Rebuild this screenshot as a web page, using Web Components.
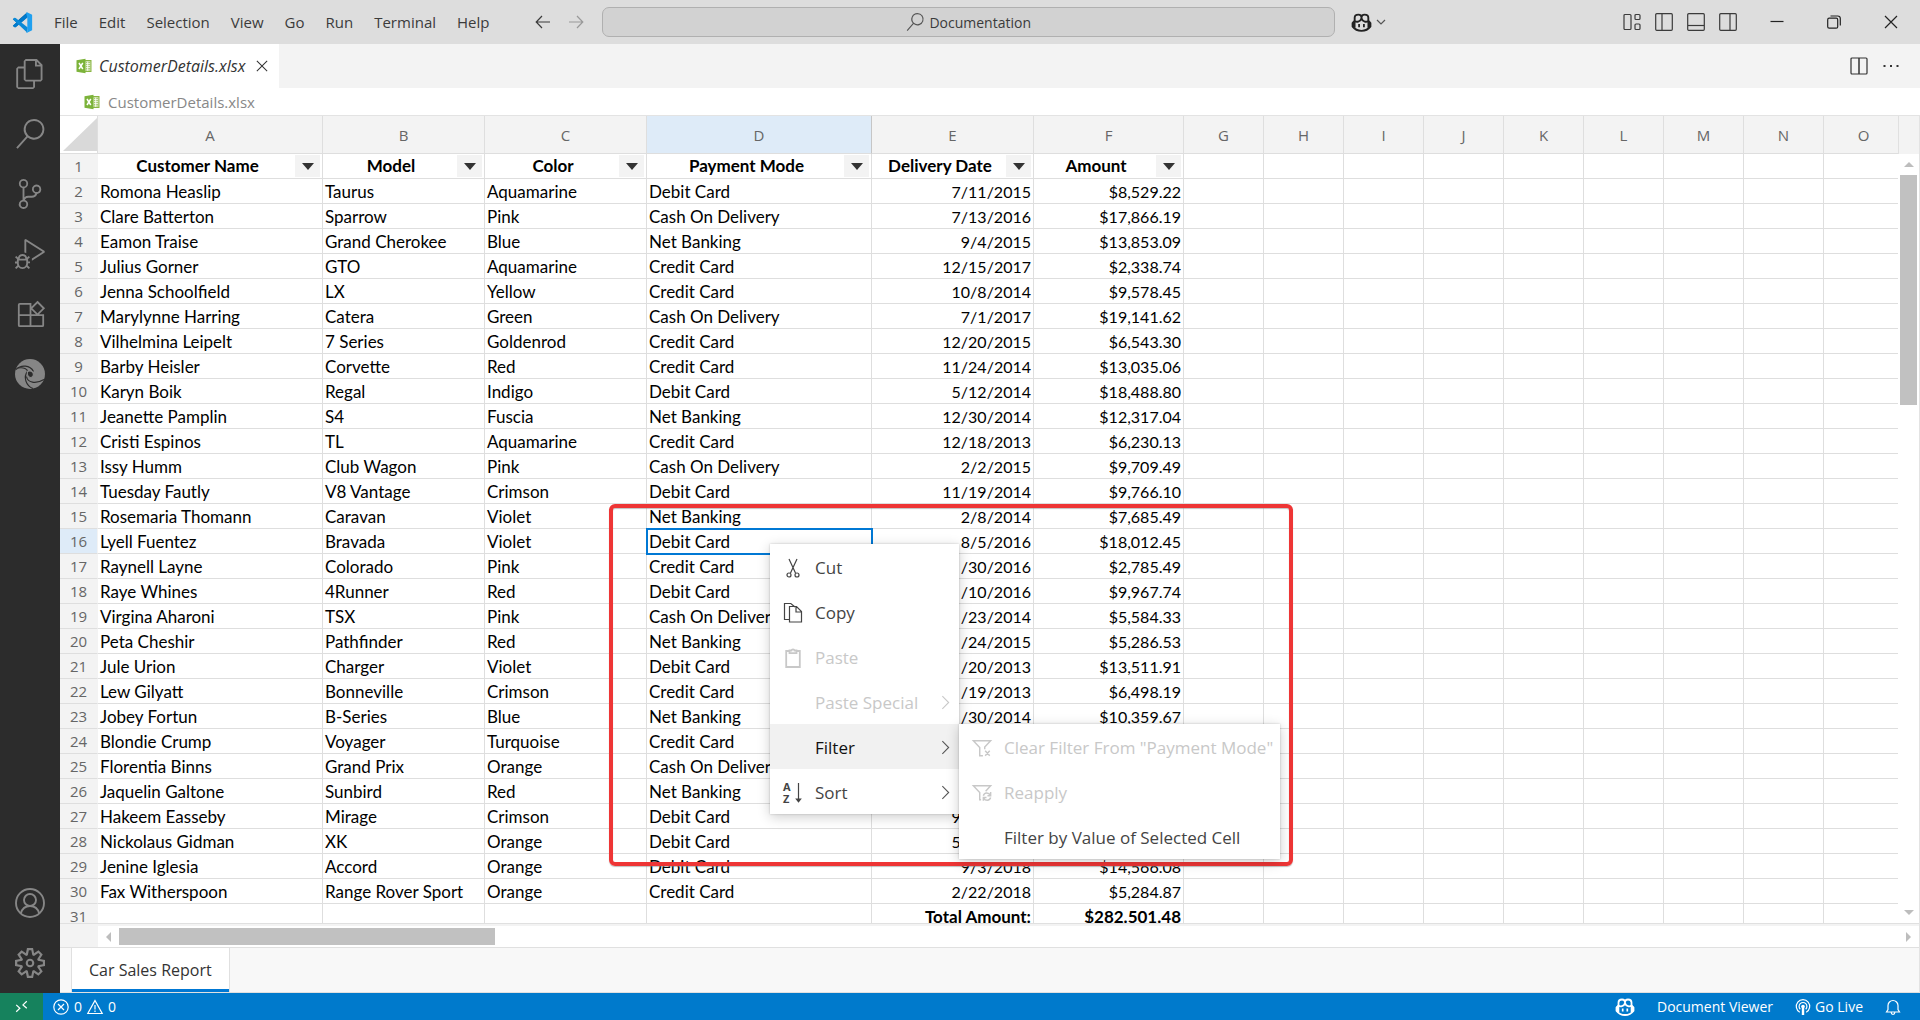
<!DOCTYPE html>
<html lang="en">
<head>
<meta charset="utf-8">
<title>CustomerDetails.xlsx - Documentation</title>
<style>
  html, body { height: 100%; }
  body { margin: 0; overflow: hidden; font-family: "Open Sans", "Noto Sans", sans-serif; font-size: 15px; color: #333; }
  work-bench { height: 100%; }
</style>
</head>
<body>
<work-bench>
  <title-bar slot="title"></title-bar>
  <activity-bar slot="activity"></activity-bar>
  <editor-tabs slot="editor"></editor-tabs>
  <sheet-view slot="editor">
    <sheet-grid slot="grid"></sheet-grid>
    <callout-frame slot="overlay"></callout-frame>
    <context-menu slot="overlay" class="cell-menu">
      <menu-item icon="cut">Cut</menu-item>
      <menu-item icon="copy">Copy</menu-item>
      <menu-item icon="paste" disabled>Paste</menu-item>
      <menu-item more disabled>Paste Special</menu-item>
      <menu-item more active>Filter
        <context-menu slot="submenu" class="wide">
          <menu-item icon="filterclear" disabled>Clear Filter From "Payment Mode"</menu-item>
          <menu-item icon="filterredo" disabled>Reapply</menu-item>
          <menu-item>Filter by Value of Selected Cell</menu-item>
        </context-menu>
      </menu-item>
      <menu-item icon="sort" more>Sort</menu-item>
    </context-menu>
  </sheet-view>
  <status-bar slot="status"></status-bar>
</work-bench>

<script>
const ICONS = {
  vscode: ['0 0 24 24', '<path fill="#0065a9" d="M1 8.2l1.6-1.4 4 3L17 .6 18 5.4 4 17.3l-1.5-.1L1 15.700l4-3.700z"/><path fill="#007acc" d="M1 15.800L17.200 1l.8 5L4.200 17.300 2.700 17.400z"/><path fill="#0a8ad8" d="M1 8.200L2.700 6.700l1.500.1L18 17.800 17.200 23.400z"/><path fill="#1fa0f0" d="M17.200.4L23 3.200v17.600l-5.800 2.800c-.6-.1-.9-.4-1.200-.8l1.500-.6V6l-1.500-4.800z"/>'],
  back: ['0 0 16 16', '<path d="M15 8H1.500M7 2L1.200 8 7 14"/>'],
  forward: ['0 0 16 16', '<path d="M1 8h13.500M9 2l5.800 6L9 14"/>'],
  search: ['0 0 24 24', '<path class="f" d="M15.250 0a8.250 8.250 0 0 0-6.180 13.720L1 22.880l1.120 1 8.050-9.120A8.251 8.251 0 1 0 15.250.01V0zm0 15a6.750 6.750 0 1 1 0-13.500 6.750 6.750 0 0 1 0 13.500z"/>'],
  copilot: ['0 0 20 18', '<path stroke-width="1.800" d="M3.500 8V4.500C3.500 2.200 5 1.500 7 1.500c2.300 0 3 1 3 2.800 0-1.800.7-2.800 3-2.800 2 0 3.500.7 3.500 3V8M3.500 7.500C5 8.800 9 8.800 10 5c1 3.800 5 3.800 6.500 2.500M10 4v2"/><path stroke-width="1.800" d="M3.500 7.500L1.500 9.500v3.200C3.500 15.500 6.500 17 10 17s6.500-1.500 8.500-4.300V9.500l-2-2"/><path stroke-width="1.700" d="M7.700 10.500v3M12.300 10.500v3"/><path stroke-width="2.600" d="M3 8v6M17 8v6"/>'],
  down: ['0 0 10 10', '<path d="M1 3l4 4 4-4"/>'],
  layout: ['0 0 18 18', '<rect x="1" y="1.500" width="7" height="15" rx="1"/><rect x="12" y="1.500" width="5" height="5" rx="1"/><rect x="12" y="11" width="5" height="5.500" rx="1"/>'],
  left: ['0 0 18 18', '<rect x=".7" y=".7" width="16.600" height="16.600" rx="1"/><path d="M7 1v16"/>'],
  panel: ['0 0 18 18', '<rect x=".7" y=".7" width="16.600" height="16.600" rx="1"/><path d="M1 12.500h16"/>'],
  right: ['0 0 18 18', '<rect x=".7" y=".7" width="16.600" height="16.600" rx="1"/><path d="M11 1v16"/>'],
  split: ['0 0 18 18', '<rect x="1" y="1" width="16" height="16" rx="1"/><path stroke-width="1.500" d="M9 1v16"/>'],
  min: ['0 0 14 14', '<path d="M.5 6.500h13"/>'],
  restore: ['0 0 14 14', '<rect x=".7" y="3.200" width="10" height="10" rx="1.500"/><path d="M3.500 1h7.200c1.500 0 2.600 1.100 2.600 2.600v7"/>'],
  close: ['0 0 14 14', '<path d="M1 1l12 12M13 1L1 13"/>'],
  dots: ['0 0 18 18', '<path class="f" d="M1.500 8h2v2h-2zM8 8h2v2H8zM14.500 8h2v2h-2z"/>'],
  files: ['0 0 24 24', '<path class="f" d="M17.500 0h-9L7 1.500V6H2.500L1 7.500v15.070L2.500 24h12.070L16 22.570V18h4.700l1.300-1.430V4.500L17.500 0zm0 2.120l2.380 2.380H17.500V2.120zm-3 20.380h-12v-15H7v9.070L8.500 18h6v4.500zm6-6h-12v-15H16V6h4.500v10.500z"/>'],
  scm: ['0 0 24 24', '<path class="f" d="M21.007 8.222A3.738 3.738 0 0 0 15.045 5.200a3.737 3.737 0 0 0 1.156 6.583 2.988 2.988 0 0 1-2.668 1.670h-2.990a4.456 4.456 0 0 0-2.989 1.165V7.400a3.737 3.737 0 1 0-1.494 0v9.117a3.776 3.776 0 1 0 1.816.099 2.990 2.990 0 0 1 2.668-1.667h2.990a4.484 4.484 0 0 0 4.223-3.039 3.736 3.736 0 0 0 3.250-3.687zM4.565 3.738a2.242 2.242 0 1 1 4.484 0 2.242 2.242 0 0 1-4.484 0zm4.484 16.441a2.242 2.242 0 1 1-4.484 0 2.242 2.242 0 0 1 4.484 0zm8.221-9.715a2.242 2.242 0 1 1 0-4.485 2.242 2.242 0 0 1 0 4.485z"/>'],
  debug: ['0 0 24 24', '<path class="f" d="M10.940 13.500l-1.320 1.320a3.730 3.730 0 0 0-7.240 0L1.060 13.500 0 14.560l1.720 1.720-.22.22V18H0v1.500h1.500v.08c.077.489.214.966.41 1.420L0 22.940 1.060 24l1.650-1.650A4.308 4.308 0 0 0 6 24a4.310 4.310 0 0 0 3.290-1.650L10.940 24 12 22.940 10.090 21c.198-.464.336-.951.41-1.450v-.1H12V18h-1.500v-1.500l-.22-.22L12 14.560l-1.060-1.060zM6 13.500a2.250 2.250 0 0 1 2.250 2.250h-4.500A2.250 2.250 0 0 1 6 13.500zm3 6a3.330 3.330 0 0 1-3 3 3.330 3.330 0 0 1-3-3v-2.250h6v2.250zm14.760-9.900v1.260L13.500 17.370V15.600l8.500-5.370L9 2v9.460a5.070 5.070 0 0 0-1.500-.72V.63L8.640 0l15.120 9.600z"/>'],
  ext: ['0 0 30 30', '<path stroke-width="1.800" d="M15.500 16V4.800H4.800a1 1 0 0 0-1 1v20.400a1 1 0 0 0 1 1h22.400a1 1 0 0 0 1-1V16.200H3.800M15.500 16v11M22.500 3l6.300 6.300-6.300 6.300-6.300-6.300z"/>'],
  edge: ['0 0 30 30', '<circle class="f" cx="15" cy="15" r="15"/><g style="stroke:#2c2c2c"><path d="M1 10.500C6 5.500 15 6 18.500 12.500"/><path d="M3 9C9 8 12.500 10 12.500 12.500 8 18 11 27 18 29.500"/><path d="M11.500 17.500c1 6 9 8 17.500 3"/></g><path fill="#2c2c2c" d="M12.500 12.500c2.500-1.300 5.200-.4 5.800 2 .6 2.200-.8 4-2.700 4-2.400 0-3.800-2.500-3.100-6z"/>'],
  account: ['0 0 30 30', '<g stroke-width="1.900"><circle cx="15" cy="15" r="14"/><circle cx="15" cy="12" r="6"/><path d="M5.800 25.500C7 21 10.500 18 15 18s8 3 9.200 7.500"/></g>'],
  gear: ['0 0 24 24', '<path class="f" fill-rule="evenodd" d="M19.850 8.750l4.150.83v4.840l-4.150.83 2.350 3.520-3.430 3.430-3.520-2.350-.83 4.150H9.580l-.83-4.150-3.520 2.350-3.430-3.430 2.350-3.520L0 14.420V9.580l4.150-.83L1.800 5.230 5.230 1.800l3.520 2.350L9.580 0h4.840l.83 4.150 3.520-2.350 3.430 3.430-2.350 3.520zm-1.570 5.070l4-.81v-2l-4-.81-.54-1.300 2.290-3.430-1.430-1.430-3.430 2.290-1.300-.54-.81-4h-2l-.81 4-1.300.54-3.430-2.290-1.430 1.430L6.380 8.900l-.54 1.300-4 .81v2l4 .81.54 1.300-2.290 3.430 1.430 1.430 3.430-2.290 1.300.54.81 4h2l.81-4 1.300-.54 3.430 2.290 1.430-1.430-2.290-3.430.54-1.300z"/><circle cx="12" cy="12" r="2.600" stroke-width="1.700"/>'],
  excel: ['0 0 16 16', '<path fill="#8ab643" d="M9 2h6.500v12H9z"/><path fill="#fff" d="M9.300 3.300h5v9.600h-5z"/><path fill="none" style="stroke:#8ab643" stroke-width="1.100" d="M10 4.300h1.300M12.200 4.300h2M10 6.300h1.300M12.200 6.300h2M10 8.300h1.300M12.200 8.300h2M10 10.300h1.300M12.200 10.300h2M10 12h1.300M12.200 12h2"/><path fill="#7cb33a" d="M.5 2.200L9.500.7v14.600l-9-1.500z"/><path style="stroke:#fff" stroke-width="1.500" d="M3 5l3.800 6M6.800 5L3 11"/>'],
  remote: ['0 0 16 16', '<path stroke-width="1.500" d="M1.500 6L6 10.200 1.500 14.500M14.500 1.500L9.800 6l4.700 4.200"/>'],
  error: ['0 0 16 16', '<circle cx="8" cy="8" r="7.200"/><path d="M5 5l6 6M11 5l-6 6"/>'],
  warn: ['0 0 16 16', '<path d="M8 1.500L15.200 14.500H.8zM8 6v4.500M8 11.500V13"/>'],
  live: ['0 0 16 16', '<path d="M4.800 13.300A6.700 6.700 0 1 1 11.200 13.300M5.300 10.200A3.900 3.900 0 1 1 10.700 10.200" /><circle class="f" cx="8" cy="7.500" r="1.800"/><path stroke-width="2.400" d="M8 8v8"/>'],
  bell: ['0 0 16 16', '<path d="M1.500 13h13L13 10.500V6.500a5 5 0 0 0-10 0v4zM6.200 13.500a1.800 1.800 0 0 0 3.600 0"/>'],
  cut: ['0 0 20 20', '<path d="M6 1l6.500 14M14 1L7.500 15"/><circle cx="6" cy="17" r="2"/><circle cx="14" cy="17" r="2"/>'],
  copy: ['0 0 20 20', '<path d="M6 16.500H1.500v-16h6.300L12 4M6.500 3.500h7l5 5V19h-12zM13 4v5h5"/>'],
  paste: ['0 0 20 20', '<path stroke-width="1.800" d="M7 3H3.200v16h13.600V3H13M6.500 2.500h2C8.700 1 11.300 1 11.500 2.500h2v2.600h-7z"/>'],
  filterclear: ['0 0 22 20', '<path stroke-width="1.600" d="M12 18.500H8.500V9.500L1.500 2h19L14 9v2.500M14.500 13l5 5.500M19.500 13l-5 5.500"/>'],
  filterredo: ['0 0 22 20', '<path stroke-width="1.600" d="M10 17.500H8.500V9.500L1.500 2h19L15 8M12.500 13c1-4 6-4 7.500-.5M20.500 9v4H17M20.500 15c-1 4-6 3.500-7.500.8M12.500 18.500V15H16"/>'],
  sort: ['0 0 20 20', '<text x="0" y="8" font-size="11" font-weight="700">A</text><text x="0" y="20" font-size="11" font-weight="700">Z</text><path d="M15.500 0v18"/><path class="f" d="M12.200 15.500h6.600L15.500 19.800z"/>'],
  more: ['0 0 10 16', '<path d="M1.500 1L8.500 8l-7 7"/>']
};

function define(name, html, setup) {
  const tpl = document.createElement('template');
  tpl.innerHTML = html;
  customElements.define(name, class extends HTMLElement {
    constructor() {
      super();
      this.attachShadow({ mode: 'open' }).append(tpl.content.cloneNode(true));
    }
    connectedCallback() {
      if (setup && !this.ready) { this.ready = true; setup(this, this.shadowRoot); }
    }
  });
}

/* Shared look of flat icon and text buttons. */
const BUTTON = `button { font: inherit; color: inherit; background: none; border: 0; margin: 0; padding: 0; display: flex; align-items: center; justify-content: center; }`;

define('vs-icon', `
<style>
  :host { display: block; flex: none; width: 18px; height: 18px; }
  svg { display: block; width: 100%; height: 100%; fill: none; stroke: currentColor; stroke-width: 1.2; overflow: visible; }
  .f { fill: currentColor; stroke: none; }
  text { fill: currentColor; stroke: none; font-family: "Open Sans", sans-serif; }
  .own { stroke: none; }
</style><svg aria-hidden="true"></svg>`, (host, root) => {
  const [box, body] = ICONS[host.getAttribute('name')];
  const svg = root.querySelector('svg');
  svg.setAttribute('viewBox', box);
  svg.innerHTML = body;
  if (host.getAttribute('name') === 'vscode' || host.getAttribute('name') === 'excel') svg.classList.add('own');
});

define('work-bench', `
<style>
  :host { display: flex; flex-direction: column; }
  .main { flex: 1; min-height: 0; display: flex; }
  .editor { flex: 1; min-width: 0; display: flex; flex-direction: column; background: #fff; }
</style>
<slot name="title"></slot>
<div class="main"><slot name="activity"></slot><div class="editor"><slot name="editor"></slot></div></div>
<slot name="status"></slot>`);

define('title-bar', `
<style>
  :host { display: flex; align-items: center; height: 44px; background: #ddd; color: #3b3b3b; flex: none; }
  ${BUTTON}
  nav { display: flex; gap: 1px; padding-left: 16px; }
  nav button { padding: 0 10px; height: 30px; }
  .logo { width: 21px; height: 21px; margin-left: 12px; margin-right: -5px; }
  .history { display: flex; gap: 17px; margin-left: 36px; margin-right: 18px; }
  .history vs-icon { width: 16px; height: 16px; }
  .history button + button { color: #999; }
  .center { flex: 1; height: 30px; box-sizing: border-box; border: 1px solid #b0b0b0; border-radius: 7px; background: #d2d2d2; gap: 5px; font-size: 14px; }
  .center vs-icon { width: 18px; height: 18px; color: #555; }
  .copilot { margin-left: 16px; gap: 4px; }
  .copilot vs-icon { width: 21px; height: 19px; color: #222; }
  .copilot vs-icon + vs-icon { width: 10px; height: 10px; color: #555; }
  .layouts { display: flex; gap: 14px; margin-left: auto; margin-right: 33px; }
  .tail { display: flex; width: 534px; }
  .window { display: flex; gap: 43px; margin-right: 22px; color: #222; }
  .window vs-icon { width: 14px; height: 14px; }
</style>
<vs-icon class="logo" name="vscode"></vs-icon>
<nav aria-label="Main menu"><button>File</button><button>Edit</button><button>Selection</button><button>View</button><button>Go</button><button>Run</button><button>Terminal</button><button>Help</button></nav>
<div class="history"><button aria-label="Back"><vs-icon name="back"></vs-icon></button><button aria-label="Forward"><vs-icon name="forward"></vs-icon></button></div>
<button class="center"><vs-icon name="search"></vs-icon><span>Documentation</span></button>
<button class="copilot" aria-label="Copilot"><vs-icon name="copilot"></vs-icon><vs-icon name="down"></vs-icon></button>
<div class="tail">
  <div class="layouts"><button aria-label="Customize layout"><vs-icon name="layout"></vs-icon></button><button aria-label="Primary side bar"><vs-icon name="left"></vs-icon></button><button aria-label="Panel"><vs-icon name="panel"></vs-icon></button><button aria-label="Secondary side bar"><vs-icon name="right"></vs-icon></button></div>
  <div class="window"><button aria-label="Minimize"><vs-icon name="min"></vs-icon></button><button aria-label="Restore"><vs-icon name="restore"></vs-icon></button><button aria-label="Close"><vs-icon name="close"></vs-icon></button></div>
</div>`);

define('activity-bar', `
<style>
  :host { display: flex; flex-direction: column; width: 60px; background: #2c2c2c; color: #868686; flex: none; }
  ${BUTTON}
  button { height: 60px; }
  vs-icon { width: 30px; height: 30px; }
  .space { flex: 1; }
</style>
<button aria-label="Explorer"><vs-icon name="files"></vs-icon></button>
<button aria-label="Search"><vs-icon name="search"></vs-icon></button>
<button aria-label="Source control"><vs-icon name="scm"></vs-icon></button>
<button aria-label="Run and debug"><vs-icon name="debug"></vs-icon></button>
<button aria-label="Extensions"><vs-icon name="ext"></vs-icon></button>
<button aria-label="Edge tools"><vs-icon name="edge"></vs-icon></button>
<div class="space"></div>
<button aria-label="Account"><vs-icon name="account"></vs-icon></button>
<button aria-label="Manage"><vs-icon name="gear"></vs-icon></button>`);

define('editor-tabs', `
<style>
  :host { display: block; flex: none; }
  ${BUTTON}
  .tabs { display: flex; height: 44px; background: #f3f3f3; align-items: center; }
  .tab { display: flex; align-items: center; height: 44px; box-sizing: border-box; background: #fff; padding: 0 11px 0 16px; }
  .tab .name { font-style: italic; font-size: 16px; margin: 0 11px 0 7px; }
  .file { width: 16px; height: 16px; }
  .tab button vs-icon { width: 12px; height: 12px; }
  .actions { margin-left: auto; display: flex; gap: 14px; padding-right: 20px; }
  .crumbs { display: flex; align-items: center; height: 27px; padding-left: 24px; gap: 8px; color: #888; }
</style>
<div class="tabs">
  <div class="tab"><vs-icon class="file" name="excel"></vs-icon><button class="name">CustomerDetails.xlsx</button><button aria-label="Close"><vs-icon name="close"></vs-icon></button></div>
  <div class="actions"><button aria-label="Split editor"><vs-icon name="split"></vs-icon></button><button aria-label="More"><vs-icon name="dots"></vs-icon></button></div>
</div>
<div class="crumbs"><vs-icon class="file" name="excel"></vs-icon><span>CustomerDetails.xlsx</span></div>`);

define('sheet-view', `
<style>
  :host { flex: 1; min-height: 0; display: flex; flex-direction: column; position: relative; border-top: 1px solid #e3e3e3; border-right: 1px solid #e3e3e3; }
  ${BUTTON}
  .upper { flex: 1; min-height: 0; display: flex; border-bottom: 1px solid #e0e0e0; }
  .viewport { flex: 1; min-width: 0; overflow: hidden; }
  .vbar { width: 21px; display: flex; flex-direction: column; align-items: center; }
  .cap { align-self: stretch; height: 38px; flex: none; background: #f3f3f3; border-left: 1px solid #e0e0e0; }
  .vbar button, .hbar button { width: 21px; height: 21px; flex: none; }
  .tri { border: 5px solid transparent; }
  .vbar .up { border-bottom-color: #bdbdbd; border-top: 0; }
  .vbar .dn { border-top-color: #bdbdbd; border-bottom: 0; }
  .hbar .lf { border-right-color: #bdbdbd; border-left: 0; }
  .hbar .rt { border-left-color: #bdbdbd; border-right: 0; }
  .vbar .thumb { width: 17px; height: 230px; background: #c1c1c1; }
  .vbar .grow, .hbar .grow { flex: 1; }
  .lower { display: flex; height: 23px; flex: none; background: #f3f3f3; padding-top: 2px; box-sizing: border-box; }
  .hbar { flex: 1; margin-left: 38px; background: #fff; display: flex; align-items: center; }
  .hbar .thumb { height: 17px; width: 376px; background: #c1c1c1; }
  .sheets { flex: none; height: 46px; box-sizing: border-box; border-top: 1px solid #e0e0e0; border-bottom: 1px solid #e0e0e0; background: #f8f8f8; padding-left: 11px; display: flex; }
  .sheets button { background: #fff; padding: 0 17px; border: 0 solid #e0e0e0; border-width: 0 1px; box-shadow: inset 0 -3px #0078d4; font-size: 16px; }
</style>
<div class="upper">
  <div class="viewport"><slot name="grid"></slot></div>
  <div class="vbar"><div class="cap"></div><button aria-label="Scroll up"><span class="tri up"></span></button><div class="thumb"></div><div class="grow"></div><button aria-label="Scroll down"><span class="tri dn"></span></button></div>
</div>
<div class="lower"><div class="hbar"><button aria-label="Scroll left"><span class="tri lf"></span></button><div class="thumb"></div><div class="grow"></div><button aria-label="Scroll right"><span class="tri rt"></span></button></div></div>
<div class="sheets"><button>Car Sales Report</button></div>
<slot name="overlay"></slot>`);

const HEADS = ['Customer Name', 'Model', 'Color', 'Payment Mode', 'Delivery Date', 'Amount'];
const ROWS = `Romona Heaslip|Taurus|Aquamarine|Debit Card|7/11/2015|$8,529.22
Clare Batterton|Sparrow|Pink|Cash On Delivery|7/13/2016|$17,866.19
Eamon Traise|Grand Cherokee|Blue|Net Banking|9/4/2015|$13,853.09
Julius Gorner|GTO|Aquamarine|Credit Card|12/15/2017|$2,338.74
Jenna Schoolfield|LX|Yellow|Credit Card|10/8/2014|$9,578.45
Marylynne Harring|Catera|Green|Cash On Delivery|7/1/2017|$19,141.62
Vilhelmina Leipelt|7 Series|Goldenrod|Credit Card|12/20/2015|$6,543.30
Barby Heisler|Corvette|Red|Credit Card|11/24/2014|$13,035.06
Karyn Boik|Regal|Indigo|Debit Card|5/12/2014|$18,488.80
Jeanette Pamplin|S4|Fuscia|Net Banking|12/30/2014|$12,317.04
Cristi Espinos|TL|Aquamarine|Credit Card|12/18/2013|$6,230.13
Issy Humm|Club Wagon|Pink|Cash On Delivery|2/2/2015|$9,709.49
Tuesday Fautly|V8 Vantage|Crimson|Debit Card|11/19/2014|$9,766.10
Rosemaria Thomann|Caravan|Violet|Net Banking|2/8/2014|$7,685.49
Lyell Fuentez|Bravada|Violet|Debit Card|8/5/2016|$18,012.45
Raynell Layne|Colorado|Pink|Credit Card|/30/2016|$2,785.49
Raye Whines|4Runner|Red|Debit Card|/10/2016|$9,967.74
Virgina Aharoni|TSX|Pink|Cash On Delivery|/23/2014|$5,584.33
Peta Cheshir|Pathfinder|Red|Net Banking|/24/2015|$5,286.53
Jule Urion|Charger|Violet|Debit Card|/20/2013|$13,511.91
Lew Gilyatt|Bonneville|Crimson|Credit Card|/19/2013|$6,498.19
Jobey Fortun|B-Series|Blue|Net Banking|/30/2014|$10,359.67
Blondie Crump|Voyager|Turquoise|Credit Card||
Florentia Binns|Grand Prix|Orange|Cash On Delivery||
Jaquelin Galtone|Sunbird|Red|Net Banking||
Hakeem Easseby|Mirage|Crimson|Debit Card|9/10/2014|
Nickolaus Gidman|XK|Orange|Debit Card|5/10/2016|
Jenine Iglesia|Accord|Orange|Debit Card|9/3/2018|$14,566.08
Fax Witherspoon|Range Rover Sport|Orange|Credit Card|2/22/2018|$5,284.87
||||Total Amount:|$282.501.48`.split('\n').map(r => r.split('|'));

define('sheet-grid', `
<style>
  :host { display: block; }
  table { border-collapse: separate; border-spacing: 0; table-layout: fixed; width: 0; }
  col.n { width: 38px; } col.w { width: 225px; } col.m { width: 162px; } col.s { width: 150px; } col.e { width: 80px; }
  th, td { box-sizing: border-box; padding: 0; height: 25px; border: 0 solid #dedede; border-width: 0 1px 1px 0; white-space: nowrap; line-height: 24px; }
  thead th { height: 38px; background: #f3f3f3; font-weight: 500; color: #666; }
  thead th:first-child { background: #fff; }
  thead th:first-child div { margin: 0 0 0 3px; height: 33px; background: #d9d9d9; clip-path: polygon(100% 0, 100% 100%, 0 100%); }
  tbody th { background: #f3f3f3; border-right-color: #f3f3f3; font-weight: 500; color: #666; }
  thead th.sel, tbody th.sel { background: #deebf8; }
  thead th.sel { border-right-color: #c6c6c6; }
  td { font-family: Lato, "Liberation Sans", sans-serif; font-size: 17px; line-height: 22px; color: #000; padding: 2px 2px 0; }
  td.num { text-align: right; font-size: 16px; }
  td.head-cell { padding-top: 0; }
  td.cur { outline: 2px solid #0078d4; outline-offset: -1px; }
  td.total, .label { font-weight: 700; }
  td.total { font-size: 17px; }
  .head { display: flex; align-items: center; height: 24px; }
  .label { flex: 1; text-align: center; }
  button { width: 25px; height: 22px; border: 0; padding: 0; background: #f3f3f3; display: flex; align-items: center; justify-content: center; }
  button::after { content: ""; border: 6px solid transparent; border-top: 7px solid #333; border-bottom: 0; }
</style>
<table><colgroup><col class="n"><col class="w"><col class="m"><col class="m"><col class="w"><col class="m"><col class="s"></colgroup><thead><tr><th><div></div></th></tr></thead><tbody></tbody></table>`, (host, root) => {
  const group = root.querySelector('colgroup'), hr = root.querySelector('thead tr'), body = root.querySelector('tbody');
  const letters = [...'ABCDEFGHIJKLMNO'];
  letters.forEach((l, i) => {
    if (i > 5) { const c = document.createElement('col'); c.className = 'e'; group.append(c); }
    const th = document.createElement('th');
    th.scope = 'col'; th.textContent = l;
    if (l === 'D') th.className = 'sel';
    hr.append(th);
  });
  [HEADS, ...ROWS].forEach((row, r) => {
    const tr = body.insertRow(), th = document.createElement('th');
    th.scope = 'row'; th.textContent = r + 1;
    if (r === 15) th.className = 'sel';
    tr.append(th);
    letters.forEach((_, c) => {
      const td = tr.insertCell(), v = row[c] || '';
      if (r === 0 && v) {
        td.className = 'head-cell';
        td.innerHTML = `<div class="head"><span class="label">${v}</span><button aria-label="Filter ${v}"></button></div>`;
        return;
      }
      td.textContent = v;
      if (c === 4 || c === 5) td.classList.add('num');
      if (r === 30) td.classList.add('total');
      if (r === 15 && c === 3) td.classList.add('cur');
    });
  });
});

/* Annotation frame and menus float over the cells. */
define('callout-frame', `
<style>
  :host { display: block; position: absolute; left: 549px; top: 388px; width: 684px; height: 362px; box-sizing: border-box; border: 4px solid #ee3535; border-radius: 6px; box-shadow: 0 1px 1px #8888, inset 0 1px 1px #8888; pointer-events: none; }
</style>`);

define('context-menu', `
<style>
  :host { display: block; position: absolute; width: 189px; background: #fff; box-shadow: 0 0 2px #0003, 0 3px 12px #0003; z-index: 1; }
  :host(.cell-menu) { left: 710px; top: 428px; }
  :host(.wide) { left: 100%; top: 0; width: 321px; }
</style><div role="menu"><slot></slot></div>`);

define('menu-item', `
<style>
  :host { display: block; position: relative; }
  ${BUTTON}
  button { width: 100%; height: 45px; padding: 2px 9px 0 13px; gap: 12px; justify-content: flex-start; font-size: 17px; color: #444; white-space: nowrap; }
  :host([disabled]) button { color: #c8c8c8; }
  :host([active]) button { background: #f1f1f1; color: #111; }
  .icon { width: 20px; height: 20px; flex: none; }
  .icon vs-icon { width: 20px; height: 20px; }
  .label { flex: 1; text-align: left; }
  .more { width: 9px; height: 15px; color: #555; }
  :host([disabled]) .more { color: #c8c8c8; }
</style>
<button role="menuitem"><span class="icon"></span><span class="label"><slot></slot></span></button><slot name="submenu"></slot>`, (host, root) => {
  const add = (parent, name, cls) => { const i = document.createElement('vs-icon'); i.setAttribute('name', name); i.className = cls; parent.append(i); };
  if (host.hasAttribute('icon')) add(root.querySelector('.icon'), host.getAttribute('icon'), '');
  if (host.hasAttribute('more')) add(root.querySelector('button'), 'more', 'more');
});

define('status-bar', `
<style>
  :host { display: flex; align-items: center; height: 27px; background: #007acc; color: #fff; flex: none; font-size: 14px; }
  ${BUTTON}
  button { height: 27px; gap: 4px; }
  vs-icon { width: 16px; height: 16px; }
  .remote { width: 43px; background: #16825d; }
  .remote vs-icon { width: 13px; height: 13px; }
  .problems { margin-left: 10px; gap: 5px; }
  .right { margin-left: auto; display: flex; gap: 22px; padding-right: 19px; }
  .right .cp { width: 20px; height: 18px; }
</style>
<button class="remote" aria-label="Remote"><vs-icon name="remote"></vs-icon></button>
<button class="problems"><vs-icon name="error"></vs-icon><span>0</span><vs-icon name="warn"></vs-icon><span>0</span></button>
<div class="right"><button aria-label="Copilot"><vs-icon class="cp" name="copilot"></vs-icon></button><button>Document Viewer</button><button><vs-icon name="live"></vs-icon><span>Go Live</span></button><button aria-label="Notifications"><vs-icon name="bell"></vs-icon></button></div>`);
</script>
</body>
</html>
